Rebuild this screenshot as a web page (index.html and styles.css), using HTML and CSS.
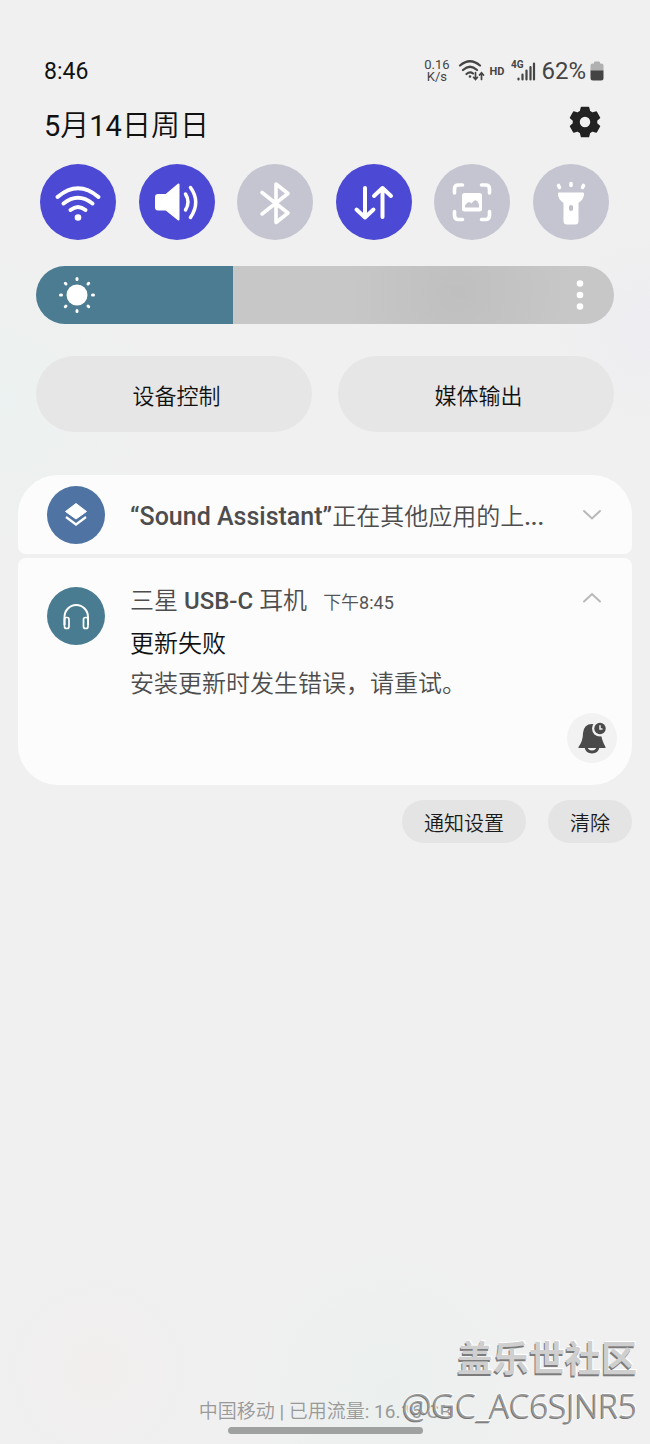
FILE: index.html
```html
<!DOCTYPE html>
<html lang="zh-CN">
<head>
<meta charset="utf-8">
<meta name="viewport" content="width=device-width, initial-scale=1">
<title>通知面板</title>
<link rel="stylesheet" href="styles.css">
</head>
<body>
<div class="panel">
  <header class="status">
    <time class="clock">8:46</time>
    <div class="indicators">
      <span class="speed">0.16<br>K/s</span>
      <svg class="ind-wifi" width="28" height="24" viewBox="0 0 28 24" fill="none" stroke="#444" stroke-width="2.200" stroke-linecap="round">
        <path d="M2 6.500Q12 -2 22 6.500M5 11Q12 4.500 19 11M8.500 15Q12 12 15 14.500"/>
        <circle cx="12" cy="17.500" r="1.300" fill="#444" stroke="none"/>
        <path d="M17.500 13.500V20M15.500 18.300L17.500 20.500L19.500 18.300M23.500 20.500V14M21.500 16L23.500 13.800L25.500 16" stroke-width="1.700"/>
      </svg>
      <span class="hd">HD</span>
      <svg class="ind-signal" width="25" height="24" viewBox="0 0 25 24">
        <text class="net" x="0" y="9">4G</text>
        <path d="M7.500 20.500v-1M11.500 20.500v-5M15.500 20.500v-9M19.500 20.500v-12.500M23 20.500V4.500" stroke="#444" stroke-width="2.200" stroke-linecap="round"/>
      </svg>
      <span class="percent">62%</span>
      <svg class="ind-battery" width="14" height="20" viewBox="0 0 14 20">
        <path d="M4 1.500Q4 .5 5 .5H9Q10 .5 10 1.500V2.500H11.500Q13.500 2.500 13.500 4.500V10H.5V4.500Q.5 2.500 2.500 2.500H4Z" fill="#b0b0b0"/>
        <path d="M.5 9.500H13.500V17Q13.500 19.500 11 19.500H3Q.5 19.500 .5 17Z" fill="#444"/>
      </svg>
    </div>
  </header>

  <div class="daybar">
    <h1 class="date">5月14日周日</h1>
    <button class="gear" type="button" aria-label="设置">
      <svg width="32" height="32" viewBox="0 0 32 32">
        <path fill="#222" fill-rule="evenodd" stroke="#222" stroke-width="1.500" stroke-linejoin="round" d="M12.500 1.500H19.500L20.500 5.500L23.300 7.200L27.300 6L30.500 11.800L27.500 14.500V17.500L30.500 20.200L27.300 26L23.300 24.800L20.500 26.500L19.500 30.500H12.500L11.500 26.500L8.700 24.800L4.700 26L1.500 20.200L4.500 17.500V14.500L1.500 11.800L4.700 6L8.700 7.200L11.500 5.500ZM16 10A6 6 0 1 0 16 22A6 6 0 1 0 16 10Z"/>
      </svg>
    </button>
  </div>

  <div class="toggles">
    <button class="toggle on" type="button" aria-label="WLAN" aria-pressed="true">
      <svg width="76" height="76" viewBox="0 0 76 76" fill="none" stroke="#fff" stroke-width="4" stroke-linecap="round">
        <path d="M17.500 33Q38 15.500 58.500 33M23.500 39.500Q38 28 52.500 39.500M30.500 46Q38 40 45.500 46"/>
        <circle cx="38" cy="53.500" r="3.300" fill="#fff" stroke="none"/>
      </svg>
    </button>
    <button class="toggle on" type="button" aria-label="声音" aria-pressed="true">
      <svg width="76" height="76" viewBox="0 0 76 76" fill="none" stroke="#fff" stroke-width="3.500" stroke-linecap="round">
        <path fill="#fff" stroke-width="2" stroke-linejoin="round" d="M19 31H27L39.500 20.500V55.500L27 45.500H19Q17 45.500 17 43.500V33Q17 31 19 31Z"/>
        <path d="M46.500 30Q51.500 38 46.500 46M51.500 23.500Q62 38 51.500 53.500"/>
      </svg>
    </button>
    <button class="toggle" type="button" aria-label="蓝牙" aria-pressed="false">
      <svg width="76" height="76" viewBox="0 0 76 76" fill="none" stroke="#fff" stroke-width="3.600" stroke-linecap="round" stroke-linejoin="round">
        <path d="M25 28.500L51 49L39 58.500V20L51 29.500L25 50"/>
      </svg>
    </button>
    <button class="toggle on" type="button" aria-label="移动数据" aria-pressed="true">
      <svg width="76" height="76" viewBox="0 0 76 76" fill="none" stroke="#fff" stroke-width="4" stroke-linecap="round" stroke-linejoin="round">
        <path d="M29 24V53M20.500 45.500L29 53.500L37.500 45.500M46.500 53V24M38 32L46.500 24L55 32"/>
      </svg>
    </button>
    <button class="toggle" type="button" aria-label="智能截图" aria-pressed="false">
      <svg width="76" height="76" viewBox="0 0 76 76">
        <path d="M20.500 29V25Q20.500 21 24.500 21H28.500M47.500 21H51.500Q55.500 21 55.500 25V29M55.500 47.500V51.500Q55.500 55.500 51.500 55.500H47.500M28.500 55.500H24.500Q20.500 55.500 20.500 51.500V47.500" fill="none" stroke="#fff" stroke-width="3.600" stroke-linecap="round"/>
        <rect x="28" y="29" width="20" height="18.500" rx="2.500" fill="#fff"/>
        <path d="M31 43.500V41.500Q34.500 35.500 37.500 39.500Q42 32.500 45 40.500V43.500Z" fill="#c5c5d0"/>
      </svg>
    </button>
    <button class="toggle" type="button" aria-label="手电筒" aria-pressed="false">
      <svg width="76" height="76" viewBox="0 0 76 76">
        <path fill="#fff" stroke="#fff" stroke-width="2" stroke-linejoin="round" d="M26 29.500H50Q50.500 34 44.500 38.500V57Q44.500 59.500 42 59.500H34Q31.500 59.500 31.500 57V38.500Q25.500 34 26 29.500Z"/>
        <rect x="36" y="41" width="4" height="6" rx="2" fill="#c0c0cc"/>
        <path d="M25.500 21.500L26.500 23.500M38 19.500V21.500M50.500 21.500L49.500 23.500" stroke="#fff" stroke-width="3.600" stroke-linecap="round"/>
      </svg>
    </button>
  </div>

  <div class="brightness">
    <input class="slider" type="range" min="0" max="100" value="34" aria-label="亮度">
    <svg class="sun" width="40" height="40" viewBox="0 0 40 40">
      <circle cx="20" cy="20" r="10.500" fill="#fff"/>
      <path d="M20 3.500V4.500M20 35.500V36.500M3.500 20H4.500M35.500 20H36.500M8.300 8.300L9 9M31 31L31.700 31.700M31.700 8.300L31 9M9 31L8.300 31.700" stroke="#fff" stroke-width="3" stroke-linecap="round"/>
    </svg>
    <button class="more" type="button" aria-label="更多选项">
      <svg width="8" height="32" viewBox="0 0 8 32" fill="#fff"><circle cx="4" cy="4.500" r="3.300"/><circle cx="4" cy="16" r="3.300"/><circle cx="4" cy="27.500" r="3.300"/></svg>
    </button>
  </div>

  <div class="shortcuts">
    <button class="shortcut" type="button">设备控制</button>
    <button class="shortcut" type="button">媒体输出</button>
  </div>

  <main class="notifications">
    <article class="card compact">
      <svg class="app-icon" width="58" height="58" viewBox="0 0 58 58">
        <circle cx="29" cy="29" r="29" fill="#4f74a3"/>
        <path d="M29 17.500L39.500 25.500L29 33L18.500 25.500Z" fill="#fff" stroke="#fff" stroke-linejoin="round"/>
        <path d="M19 31L29 38.500L39 31" fill="none" stroke="#fff" stroke-width="2.200"/>
      </svg>
      <h2 class="title clip"><span class="latin app-name">“Sound Assistant”</span>正在其他应用的上<span class="latin">...</span></h2>
      <button class="chevron" type="button" aria-label="展开">
        <svg width="20" height="12" viewBox="0 0 20 12"><path d="M2 2L10 9.500L18 2" fill="none" stroke="#b8b8b8" stroke-width="2" stroke-linecap="round"/></svg>
      </button>
    </article>
    <article class="card expanded">
      <svg class="app-icon" width="58" height="58" viewBox="0 0 58 58">
        <circle cx="29" cy="29" r="29" fill="#4a7c91"/>
        <path d="M17.500 38V30A11.700 12 0 0 1 41 30V38" fill="none" stroke="#fff" stroke-width="2"/>
        <rect x="17.500" y="30.500" width="4.500" height="11" rx="2" fill="none" stroke="#fff" stroke-width="1.700"/>
        <rect x="36.500" y="30.500" width="4.500" height="11" rx="2" fill="none" stroke="#fff" stroke-width="1.700"/>
      </svg>
      <div class="content">
        <div class="source"><h2 class="title">三星 <span class="latin">USB-C</span> 耳机</h2><time class="when">下午8:45</time></div>
        <p class="headline">更新失败</p>
        <p class="message">安装更新时发生错误，请重试。</p>
      </div>
      <div class="side">
        <button class="chevron" type="button" aria-label="收起">
          <svg width="20" height="12" viewBox="0 0 20 12"><path d="M2 9.500L10 2L18 9.500" fill="none" stroke="#b8b8b8" stroke-width="2" stroke-linecap="round"/></svg>
        </button>
        <button class="snooze" type="button" aria-label="暂停通知">
          <svg width="50" height="50" viewBox="0 0 50 50">
            <path d="M19 34Q20 39 25 39Q30 39 31 34" fill="none" stroke="#4a4a4a" stroke-width="3"/>
            <path d="M25 11Q33 11 34 19.500Q34 26 38.500 34V35H11.500V34Q16 28 16 20Q17 11 25 11Z" fill="#4a4a4a"/>
            <circle cx="33" cy="15.500" r="8" fill="#f2f2f2"/>
            <circle cx="33" cy="15.500" r="5.700" fill="#4a4a4a"/>
            <path d="M33 12.300V16H35.500" fill="none" stroke="#f2f2f2" stroke-width="1.500"/>
          </svg>
        </button>
      </div>
    </article>
  </main>

  <div class="actions">
    <button class="pill" type="button">通知设置</button>
    <button class="pill" type="button">清除</button>
  </div>

  <footer class="footer">
    <p class="carrier">中国移动 | 已用流量: 16.16 GB</p>
    <div class="handle"></div>
    <div class="watermark">
      <span class="community">盖乐世社区</span>
      <span class="author">@GC_AC6SJNR5</span>
    </div>
  </footer>
</div>
</body>
</html>
```
FILE: styles.css
```css
* {
  box-sizing: border-box;
}

body {
  margin: 0;
  background:
    radial-gradient(circle at 0 400px, #ecf2f1 0, transparent 150px),
    radial-gradient(circle at 100% 330px, #ededf2 0, transparent 100px),
    radial-gradient(circle at 15% 1370px, #f2eeee 0, transparent 110px),
    radial-gradient(circle at 60% 1390px, #ebf0ef 0, transparent 150px),
    #f0f0f0;
  color: #111;
  font-family: Roboto, "Noto Sans CJK SC DemiLight", "Noto Sans CJK SC", sans-serif;
}

h1,
h2,
p {
  margin: 0;
  font-weight: 400;
}

button {
  padding: 0;
  border: 0;
  background: none;
  color: inherit;
  font-family: inherit;
}

svg {
  display: block;
  flex: none;
}

.panel {
  display: flex;
  flex-direction: column;
  min-height: 100vh;
  padding-top: 54px;
}

.status {
  display: flex;
  align-items: center;
  justify-content: space-between;
  height: 34px;
  padding: 0 46px 0 44px;
}

.clock {
  font-size: 23px;
}

.indicators {
  display: flex;
  align-items: center;
  color: #444;
}

.speed {
  margin-right: 8px;
  font-size: 13px;
  line-height: 12px;
  text-align: center;
}

.hd {
  margin: 0 7px 0 4px;
  font-size: 11px;
  font-weight: 700;
}

.net {
  fill: #444;
  font-size: 10px;
  font-weight: 700;
}

.percent {
  margin: 0 4px 0 5px;
  font-size: 24px;
}

.daybar {
  display: flex;
  align-items: center;
  justify-content: space-between;
  height: 76px;
  padding: 0 49px 8px 44px;
}

.date {
  font-size: 29px;
  padding-top: 2px;
}

.toggles {
  display: flex;
  justify-content: space-between;
  padding: 0 41px 0 40px;
}

.toggle {
  border-radius: 50%;
  background: #c4c5d0;
}

.toggle.on {
  background: #4c49d4;
}

.brightness {
  position: relative;
  margin: 26px 36px 0;
}

.slider {
  display: block;
  width: 100%;
  height: 58px;
  margin: 0;
  border-radius: 29px;
  appearance: none;
  background:
    linear-gradient(90deg, #4b7c92 34%, transparent 34%),
    radial-gradient(circle at 73% 45%, #bfbfbf, #c7c7c7 110px);
}

.slider::-webkit-slider-thumb {
  width: 1px;
  height: 58px;
  appearance: none;
  background: transparent;
}

.sun {
  position: absolute;
  top: 9px;
  left: 21px;
  pointer-events: none;
}

.more {
  position: absolute;
  top: 13px;
  right: 30px;
}

.shortcuts {
  display: grid;
  grid-template-columns: 1fr 1fr;
  gap: 26px;
  margin: 32px 36px 0;
}

.shortcut {
  height: 76px;
  padding-left: 5px;
  border-radius: 38px;
  background: #e6e6e6;
  font-size: 22px;
}

.notifications {
  display: grid;
  gap: 4px;
  margin: 43px 18px 0;
}

.card {
  display: flex;
  padding: 0 29px;
  background: #fcfcfc;
}

.compact {
  align-items: center;
  height: 79px;
  border-radius: 40px 40px 8px 8px;
}

.expanded {
  min-height: 227px;
  padding-top: 29px;
  border-radius: 8px 8px 40px 40px;
}

.title {
  color: #4d4d4d;
  font-size: 24px;
  line-height: 32px;
  white-space: nowrap;
}

.latin {
  font-weight: 500;
}

.app-name {
  font-size: 25px;
}

.clip {
  flex: 1;
  min-width: 0;
  margin-left: 25px;
  padding-top: 4px;
  overflow: hidden;
}

.chevron {
  margin-right: 1px;
}

.content {
  flex: 1;
  min-width: 0;
  margin-left: 25px;
  margin-top: -2px;
}

.source {
  display: flex;
  align-items: baseline;
  gap: 16px;
}

.when {
  color: #555;
  font-size: 18px;
}

.headline,
.message {
  font-size: 24px;
  line-height: 40px;
}

.headline {
  margin-top: 7px;
}

.message {
  color: #4d4d4d;
}

.side {
  display: flex;
  flex-direction: column;
  align-items: flex-end;
  justify-content: space-between;
  margin: 5px 0 22px;
}

.side .snooze {
  margin-right: -14px;
}

.snooze {
  border-radius: 50%;
  background: #f2f2f2;
}

.actions {
  display: flex;
  justify-content: flex-end;
  gap: 22px;
  padding: 15px 18px 0;
}

.pill {
  height: 43px;
  padding: 2px 22px 0;
  border-radius: 22px;
  background: #e4e4e4;
  color: #1a1a1a;
  font-size: 20px;
}

.footer {
  position: relative;
  display: flex;
  flex-direction: column;
  align-items: center;
  margin-top: auto;
  padding-bottom: 10px;
}

.carrier {
  color: #999;
  font-size: 19px;
  line-height: 30px;
}

.handle {
  width: 30%;
  height: 7px;
  border-radius: 4px;
  background: #9fa1a1;
}

.watermark {
  position: absolute;
  right: 13px;
  bottom: 14px;
  display: flex;
  flex-direction: column;
  align-items: flex-end;
  color: #cfcfcf;
  font-family: "Open Sans", "Noto Sans CJK SC", sans-serif;
  text-shadow: -1px 2px 0 #7c7c7c, 1px -1px 0 #fff;
}

.community {
  font-size: 36px;
  font-weight: 700;
  line-height: 46px;
}

.author {
  color: #999;
  font-size: 33px;
  font-weight: 300;
  line-height: 48px;
  text-shadow: -1px 1px 0 #777, 1px -1px 0 #fff;
}
```
